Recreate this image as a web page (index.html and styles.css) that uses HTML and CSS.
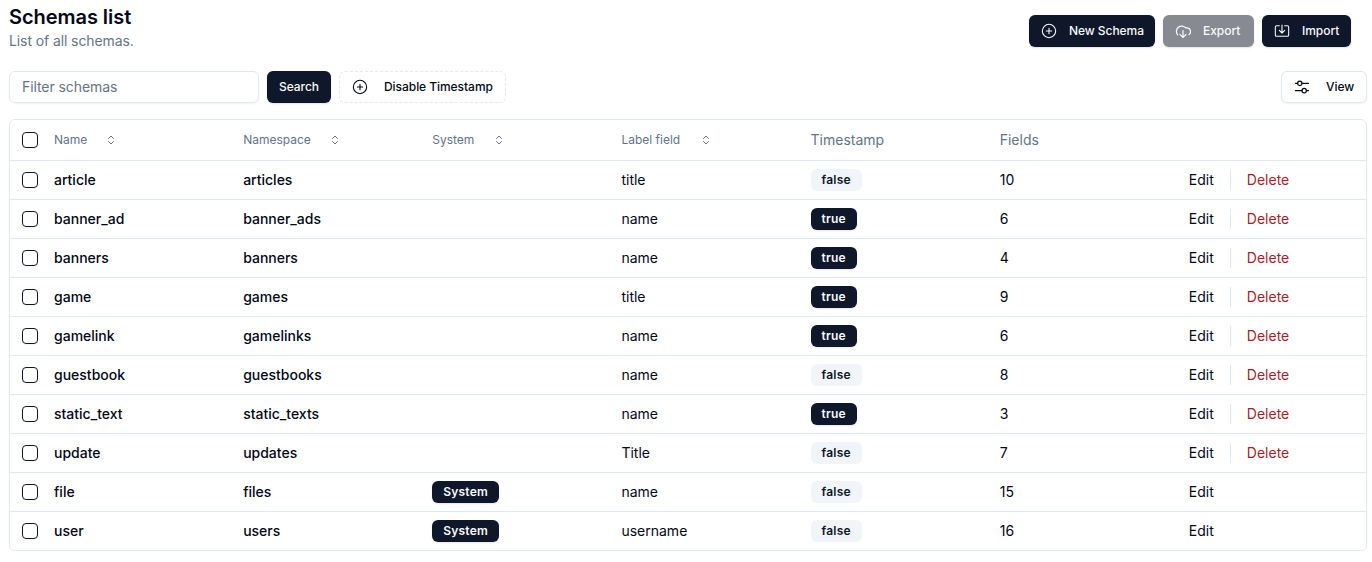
FILE: index.html
```html
<!DOCTYPE html>
<html lang="en">
<head>
<meta charset="utf-8">
<title>Schemas list</title>
<link rel="stylesheet" href="styles.css">
</head>
<body>
<svg class="defs" width="0" height="0" aria-hidden="true">
  <symbol id="plus" viewBox="0 0 24 24"><circle cx="12" cy="12" r="10"/><path d="M8 12h8M12 8v8"/></symbol>
  <symbol id="cloud" viewBox="1.5 2 21 21"><path d="M5 17.5A6.5 6.5 0 1 1 15.7 8.5h1.3a4.8 4.8 0 0 1 3 8.6"/><path d="M12 12v9M8 17l4 4 4-4"/></symbol>
  <symbol id="import" viewBox="0 0 24 24"><path d="M8 4H4a2 2 0 0 0-2 2v12a2 2 0 0 0 2 2h16a2 2 0 0 0 2-2V6a2 2 0 0 0-2-2h-4"/><path d="M12 3v12M8 11l4 4 4-4"/></symbol>
  <symbol id="sliders" viewBox="1 1 22 22"><path d="M21 7h-9M6 7H3M21 17h-3M12 17H3"/><circle cx="9" cy="7" r="3"/><circle cx="15" cy="17" r="3"/></symbol>
  <symbol id="sort" viewBox="0 0 24 24"><path d="m7 15 5 5 5-5M7 9l5-5 5 5"/></symbol>
</svg>
<main class="page">
  <header class="top">
    <div>
      <h1 class="title">Schemas list</h1>
      <p class="subtitle">List of all schemas.</p>
    </div>
    <div class="actions">
      <button class="btn dark new"><svg class="ic"><use href="#plus"/></svg>New Schema</button>
      <button class="btn dark muted"><svg class="ic"><use href="#cloud"/></svg>Export</button>
      <button class="btn dark"><svg class="ic"><use href="#import"/></svg>Import</button>
    </div>
  </header>
  <div class="toolbar">
    <div class="filter">Filter schemas</div>
    <button class="btn dark search">Search</button>
    <button class="btn dashed"><svg class="ic"><use href="#plus"/></svg>Disable Timestamp</button>
    <button class="btn outline"><svg class="ic"><use href="#sliders"/></svg>View</button>
  </div>
  <div class="card">
    <table class="table">
      <colgroup><col class="c0"><col class="cw"><col class="cw"><col class="cw"><col class="cw"><col class="cw"><col class="cw"><col class="cw"></colgroup>
      <thead>
        <tr>
          <th><span class="check"></span></th>
          <th class="sm"><span class="sortable n1">Name<svg class="sort"><use href="#sort"/></svg></span></th>
          <th class="sm"><span class="sortable n2">Namespace<svg class="sort"><use href="#sort"/></svg></span></th>
          <th class="sm"><span class="sortable n3">System<svg class="sort"><use href="#sort"/></svg></span></th>
          <th class="sm"><span class="sortable n4">Label field<svg class="sort"><use href="#sort"/></svg></span></th>
          <th>Timestamp</th>
          <th>Fields</th>
          <th></th>
        </tr>
      </thead>
      <tbody>
        <tr><td><span class="check"></span></td><td class="key">article</td><td class="key">articles</td><td></td><td>title</td><td><span class="badge light">false</span></td><td>10</td><td><span class="ops"><span>Edit</span><span class="sep"></span><span class="del">Delete</span></span></td></tr>
        <tr><td><span class="check"></span></td><td class="key">banner_ad</td><td class="key">banner_ads</td><td></td><td>name</td><td><span class="badge">true</span></td><td>6</td><td><span class="ops"><span>Edit</span><span class="sep"></span><span class="del">Delete</span></span></td></tr>
        <tr><td><span class="check"></span></td><td class="key">banners</td><td class="key">banners</td><td></td><td>name</td><td><span class="badge">true</span></td><td>4</td><td><span class="ops"><span>Edit</span><span class="sep"></span><span class="del">Delete</span></span></td></tr>
        <tr><td><span class="check"></span></td><td class="key">game</td><td class="key">games</td><td></td><td>title</td><td><span class="badge">true</span></td><td>9</td><td><span class="ops"><span>Edit</span><span class="sep"></span><span class="del">Delete</span></span></td></tr>
        <tr><td><span class="check"></span></td><td class="key">gamelink</td><td class="key">gamelinks</td><td></td><td>name</td><td><span class="badge">true</span></td><td>6</td><td><span class="ops"><span>Edit</span><span class="sep"></span><span class="del">Delete</span></span></td></tr>
        <tr><td><span class="check"></span></td><td class="key">guestbook</td><td class="key">guestbooks</td><td></td><td>name</td><td><span class="badge light">false</span></td><td>8</td><td><span class="ops"><span>Edit</span><span class="sep"></span><span class="del">Delete</span></span></td></tr>
        <tr><td><span class="check"></span></td><td class="key">static_text</td><td class="key">static_texts</td><td></td><td>name</td><td><span class="badge">true</span></td><td>3</td><td><span class="ops"><span>Edit</span><span class="sep"></span><span class="del">Delete</span></span></td></tr>
        <tr><td><span class="check"></span></td><td class="key">update</td><td class="key">updates</td><td></td><td>Title</td><td><span class="badge light">false</span></td><td>7</td><td><span class="ops"><span>Edit</span><span class="sep"></span><span class="del">Delete</span></span></td></tr>
        <tr><td><span class="check"></span></td><td class="key">file</td><td class="key">files</td><td><span class="badge">System</span></td><td>name</td><td><span class="badge light">false</span></td><td>15</td><td><span class="ops"><span>Edit</span></span></td></tr>
        <tr><td><span class="check"></span></td><td class="key">user</td><td class="key">users</td><td><span class="badge">System</span></td><td>username</td><td><span class="badge light">false</span></td><td>16</td><td><span class="ops"><span>Edit</span></span></td></tr>
      </tbody>
    </table>
  </div>
</main>
</body>
</html>
```
FILE: styles.css
```css
* { box-sizing: border-box; }
html, body { margin: 0; padding: 0; background: #fff; }
body { font-family: Inter, "Liberation Sans", sans-serif; color: #0f172a; font-size: 14px; }
.defs { position: absolute; }
.page { padding: 4px 5px 0 9px; }
.top { display: flex; justify-content: space-between; height: 67px; }
.title { margin: 0; font-size: 20px; line-height: 26px; font-weight: 600; color: #020817; letter-spacing: -0.05px; }
.subtitle { margin: 1px 0 0; font-size: 14px; line-height: 20px; color: #64748b; letter-spacing: -0.1px; }
.actions { display: flex; gap: 8px; padding: 11px 16px 0 0; }
.btn {
  display: inline-flex; align-items: center; height: 32px; border: 0; border-radius: 6px;
  font: 500 12px/16px Inter, "Liberation Sans", sans-serif; padding: 0 12px; white-space: nowrap; letter-spacing: -0.05px;
}
.dark { background: #0f172a; color: #f8fafc; box-shadow: 0 1px 2px rgba(0,0,0,.12); }
.muted { background: #878a92; }
.new { width: 126px; }
.actions .muted { width: 91px; }
.actions .btn:last-child { width: 89px; }
.ic { width: 16px; height: 16px; margin-right: 12px; fill: none; stroke: currentColor; stroke-width: 1.6; stroke-linecap: round; stroke-linejoin: round; flex: none; }
.toolbar { display: flex; gap: 8px; align-items: center; }
.filter {
  width: 250px; height: 32px; border: 1px solid #e2e8f0; border-radius: 6px; padding: 0 12px;
  font-size: 14px; line-height: 30px; color: #64748b; letter-spacing: -0.08px; box-shadow: 0 1px 2px rgba(0,0,0,.05);
}
.search { width: 64px; justify-content: center; padding: 0; }
.dashed { width: 167px; background: #fff; color: #020817; border: 1px dashed #e2e8f0; padding-left: 12px; }
.dashed .ic { margin-right: 16px; }
.outline {
  margin-left: auto; width: 86px; background: #fff; color: #020817; border: 1px solid #e2e8f0; padding-left: 12px;
  box-shadow: 0 1px 2px rgba(0,0,0,.05);
}
.outline .ic { margin-right: 16px; }
.card { margin-top: 16px; width: 1358px; border: 1px solid #e2e8f0; border-radius: 6px; overflow: hidden; }
.table { width: 100%; border-collapse: collapse; table-layout: fixed; }
.c0 { width: 32px; }
.cw { width: 189.1px; }
th, td { padding: 0 12px; text-align: left; vertical-align: middle; }
th:first-child, td:first-child { padding: 0 0 0 12px; }
th { height: 40px; font-size: 14px; font-weight: 400; color: #64748b; }
th.sm { font-size: 12px; }
td { height: 39px; font-size: 14px; color: #020817; }
td.key { font-weight: 500; }
tr { border-bottom: 1px solid #e2e8f0; }
tbody tr:last-child { border-bottom: 0; }
.check { display: block; width: 16px; height: 16px; border: 1px solid #0f172a; border-radius: 4px; box-shadow: 0 1px 2px rgba(0,0,0,.05); }
.sortable { display: inline-flex; align-items: center; }
.sort { width: 12px; height: 12px; fill: none; stroke: #64748b; stroke-width: 2; stroke-linecap: round; stroke-linejoin: round; }
.n1 .sort { margin-left: 18px; }
.n2 .sort { margin-left: 18px; }
.n3 .sort { margin-left: 19px; }
.n4 .sort { margin-left: 20px; }
.badge {
  display: inline-flex; align-items: center; height: 22px; padding: 0 11px; border-radius: 6px;
  background: #0f172a; color: #f8fafc; font-size: 12px; font-weight: 600; line-height: 16px; letter-spacing: 0.2px;
  vertical-align: middle; box-shadow: 0 1px 2px rgba(0,0,0,.1);
}
.light { background: #f1f5f9; color: #0f172a; box-shadow: none; }
.ops { display: flex; align-items: center; }
.sep { width: 1px; height: 20px; background: #e2e8f0; margin: 0 16px; }
.del { color: #a91d2a; }
```
